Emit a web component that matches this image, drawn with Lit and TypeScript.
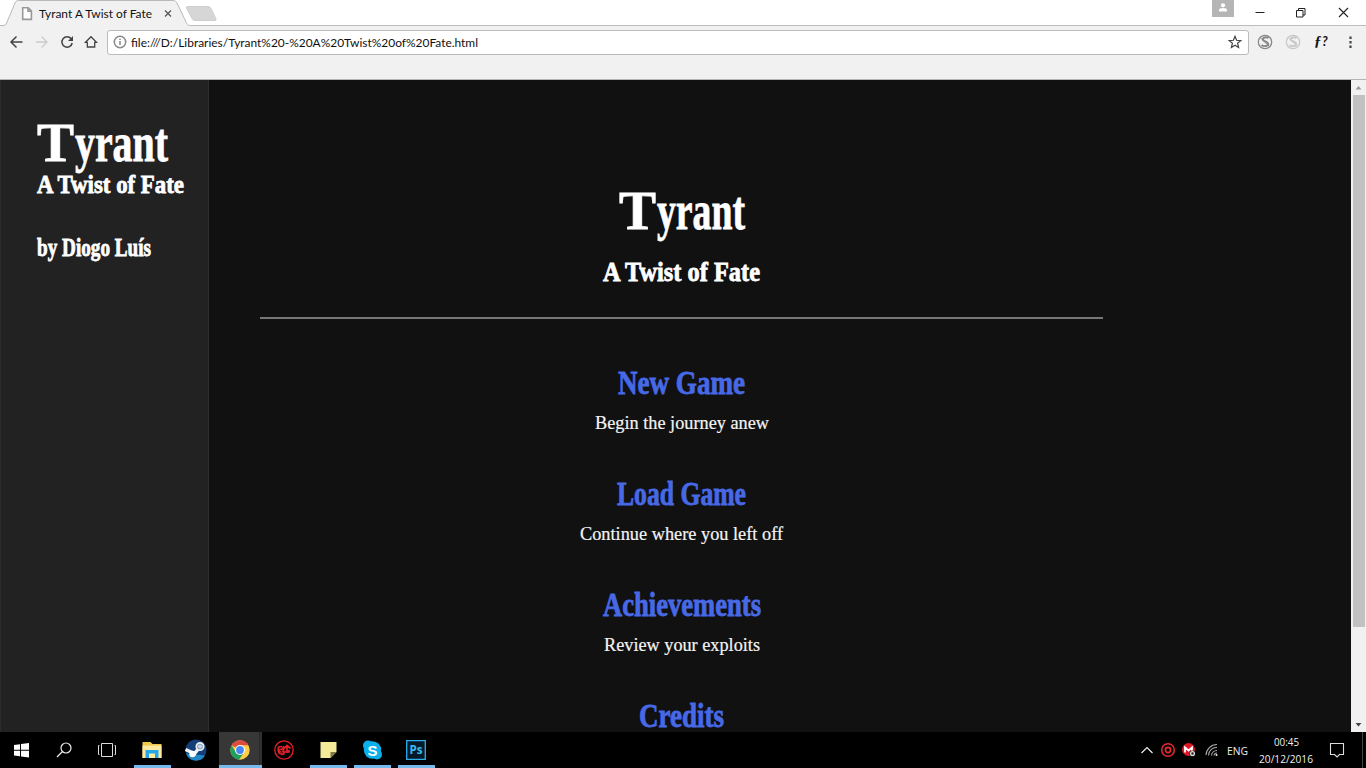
import { LitElement, html, svg, css, nothing } from "lit";
import { customElement } from "lit/decorators.js";

// One line of text set to an exact measure.
const line = (cls: string, text: string, width: number, height: number, baseline: number) => html`
  <svg class="line ${cls}" width=${width} height=${height}>
    <text x="0" y=${baseline} textLength=${width} lengthAdjust="spacingAndGlyphs">${text}</text>
  </svg>`;

// The title has a wide initial, followed by the condensed rest of the word.
const title = (width: number, height: number, baseline: number) => html`
  <svg class="line head" width=${width} height=${height}>
    <text y=${baseline}><tspan x="0" textLength="37" lengthAdjust="spacingAndGlyphs">T</tspan><tspan x="38" textLength=${width - 38} lengthAdjust="spacingAndGlyphs">yrant</tspan></text>
  </svg>`;

const icon = (width: number, height: number, body: unknown) => html`
  <svg class="icon" width=${width} height=${height} viewBox="0 0 ${width} ${height}" fill="none">${body}</svg>`;

@customElement("browser-chrome")
class BrowserChrome extends LitElement {
  static styles = css`
    :host { display: block; height: 80px; box-sizing: border-box; background: #f1f1f1; border-bottom: 1px solid #b4b4b4; font-family: Lato, "Open Sans", sans-serif; }
    svg { display: block; flex: none; overflow: visible; }
    .strip { height: 26px; display: flex; background: #fff; box-shadow: inset 0 -1px #bdbdbd; }
    .tabs { flex: 1; }
    .tab-title { font-size: 12px; fill: #111; }
    .user { width: 22px; height: 17px; background: #b5b5b5; margin-right: 17px; }
    .win { width: 42px; height: 25px; }
    .win.close { width: 31px; }
    .bar { display: flex; height: 32px; align-items: center; }
    .nav { display: flex; padding-left: 5px; width: 102px; }
    .address { display: flex; align-items: center; width: 1142px; box-sizing: border-box; height: 25px; border: 1px solid #bbb; border-radius: 3px; background: #fff; padding-left: 3px; }
    .url { font-size: 12px; fill: #111; margin-left: 2px; }
    .star { margin-left: auto; }
    .f { font: italic bold 15px "Liberation Serif", serif; fill: #111; }
    .q { font: italic bold 13px Lato, sans-serif; fill: #111; }
  `;
  render() {
    const arrow = svg`<path d="M18.500 12H7.500M12.500 6.500L7 12l5.500 5.500" stroke="#444" stroke-width="1.500"/>`;
    const flipped = svg`<path d="M6 12h11M11.500 6.500L17 12l-5.500 5.500" stroke="#ccc" stroke-width="1.400"/>`;
    const script = (c: string) => svg`<circle cx="14" cy="12" r="6.700" stroke=${c} stroke-width="1.300"/><path d="M17.500 8c-2.500-1.500-6-.5-5.500 1.800.4 1.700 5 1.700 5.200 4 .2 2.500-4.500 3-6.700 1.200" stroke=${c} stroke-width="1.900"/><path d="M9.500 8l9 8.500" stroke=${c}/>`;
    return html`
      <div class="strip">
        <svg class="tabs" width="1212" height="26">
          <path d="M0 25.500H4C6 25 6.500 23.500 7 22L15 3C15.700 1.500 16.500.5 18.500.5H173C175 .5 176 1.500 177 3L186 22C187 24.500 188 25.500 190 25.500V27H0Z" fill="#f1f1f1"/>
          <path d="M0 25.500H4C6 25 6.500 23.500 7 22L15 3C15.700 1.500 16.500.5 18.500.5H173C175 .5 176 1.500 177 3L186 22C187 24.500 188 25.500 190 25.500" fill="none" stroke="#b9b9b9"/>
          <path d="M22.700 7.700h5.500l3.200 3.200v8.500h-8.700zM28 7.700v3.500h3.400" fill="#fff" stroke="#999" stroke-width="1.600"/>
          <text class="tab-title" x="39" y="17.500" textLength="113" lengthAdjust="spacingAndGlyphs">Tyrant A Twist of Fate</text>
          <path d="M165 10.500l6 6M171 10.500l-6 6" stroke="#555" stroke-width="1.200"/>
          <path d="M187.500 6.500H208Q210 6.500 211 8.500L216 19Q216.500 20.500 215 20.500H195Q193 20.500 192 18.500L186.500 8Q186 6.500 187.500 6.500Z" fill="#d6d6d6" stroke="#cecece"/>
        </svg>
        <div class="user">${icon(22, 17, svg`<circle cx="11" cy="5.300" r="2.100" fill="#fff"/><path d="M7 11.500V10q0-2 4-2t4 2v1.500z" fill="#fff"/>`)}</div>
        <div class="win">${icon(42, 25, svg`<path d="M4.500 12.500h9" stroke="#222"/>`)}</div>
        <div class="win">${icon(31, 25, svg`<path d="M3.500 10.500h6.500v6.500H3.500zM5.500 10V8.500H12V15h-2" stroke="#222"/>`)}</div>
        <div class="win close">${icon(31, 25, svg`<path d="M4 8l9 9M13 8l-9 9" stroke="#222" stroke-width="1.100"/>`)}</div>
      </div>
      <div class="bar">
        <div class="nav">
          ${icon(25, 24, svg`<g transform="translate(-1)">${arrow}</g>`)}
          ${icon(25, 24, svg`<g transform="translate(0)">${flipped}</g>`)}
          ${icon(25, 24, svg`<path d="M16.200 8.700A5.200 5.200 0 1 0 17.200 13" stroke="#444" stroke-width="1.500"/><path d="M18 6v5h-5z" fill="#444"/>`)}
          ${icon(25, 24, svg`<path d="M5.500 12.300L11 6.700l5.500 5.600h-1.800v4.700H7.300v-4.700z" stroke="#444" stroke-width="1.300"/>`)}
        </div>
        <div class="address">
          ${icon(18, 24, svg`<circle cx="9" cy="12" r="5.700" stroke="#888" stroke-width="1.500"/><path d="M9 11v4M9 8.700v1.300" stroke="#888" stroke-width="1.500"/>`)}
          ${line("url", "file:///D:/Libraries/Tyrant%20-%20A%20Twist%20of%20Fate.html", 347, 23, 15.5)}
          <div class="star">${icon(25, 24, svg`<path d="M12 6.300l1.600 4 4.200.3-3.200 2.700 1 4.200-3.600-2.300-3.600 2.300 1-4.200-3.200-2.700 4.200-.3z" stroke="#444" stroke-width="1.200"/>`)}</div>
        </div>
        ${icon(28, 24, svg`<g transform="translate(2)">${script("#888")}</g>`)}
        ${icon(28, 24, svg`<g transform="translate(2)">${script("#c8c8c8")}</g>`)}
        ${icon(30, 24, svg`<text class="f" x="9" y="16">ƒ<tspan class="q" x="17">?</tspan></text>`)}
        ${icon(24, 24, svg`<path d="M14.500 6.500v2.500M14.500 11v2.500M14.500 15.500V18" stroke="#444" stroke-width="2.200" transform="translate(1)"/>`)}
      </div>`;
  }
}

@customElement("game-page")
class GamePage extends LitElement {
  static styles = css`
    :host { display: flex; height: 652px; background: #111; overflow: hidden; font-family: "Liberation Serif", serif; }
    svg { display: block; flex: none; overflow: visible; }
    .side { width: 209px; box-sizing: border-box; background: #222; border-right: 1px solid #2e2e2e; box-shadow: inset 1px 0 #2c2c2c; padding: 30px 0 0 37px; }
    .main { flex: 1; display: flex; flex-direction: column; align-items: center; padding: 100px 197px 0 0; overflow: hidden; }
    .head, .sub, .link { font-weight: bold; fill: #fff; stroke: #fff; stroke-width: .8px; }
    .head { font-size: 55px; }
    .sub { font-size: 27px; }
    .small { font-size: 25px; }
    .link { font-size: 33px; fill: #4769e6; stroke: #4769e6; }
    .caption { font-size: 19px; fill: #f4f4f4; stroke: #f4f4f4; stroke-width: .2px; }
    .rule { width: 843px; height: 2px; flex: none; background: #777; margin: 17px 0 41px; }
    .entry { height: 111px; flex: none; display: flex; flex-direction: column; align-items: center; }
    .scroll { width: 15px; background: #f1f1f1; display: flex; flex-direction: column; align-items: center; }
    .thumb { width: 12px; height: 532px; background: #c1c1c1; margin-bottom: auto; }
  `;
  private entries: [string, number, string, number][] = [
    ["New Game", 127, "Begin the journey anew", 174],
    ["Load Game", 129, "Continue where you left off", 203],
    ["Achievements", 158, "Review your exploits", 156],
    ["Credits", 85, "", 0],
  ];
  render() {
    return html`
      <aside class="side">
        ${title(131, 60, 51)}
        ${line("sub small", "A Twist of Fate", 147, 50, 23)}
        ${line("sub small", "by Diogo Luís", 114, 50, 36)}
      </aside>
      <main class="main">
        ${title(126, 65, 49)}
        ${line("sub", "A Twist of Fate", 157, 55, 36)}
        <div class="rule"></div>
        ${this.entries.map(([name, w, note, nw]) => html`
          <div class="entry">
            ${line("link", name, w, 45, 33.5)}
            ${note ? line("caption", note, nw, 40, 24) : nothing}
          </div>`)}
      </main>
      <div class="scroll">
        ${icon(15, 15, svg`<path d="M4.500 9.500L7.500 6l3 3.500z" fill="#999"/>`)}
        <div class="thumb"></div>
        ${icon(15, 15, svg`<path d="M4.500 6L7.500 9.500l3-3.500z" fill="#444"/>`)}
      </div>`;
  }
}

@customElement("task-bar")
class TaskBar extends LitElement {
  static styles = css`
    :host { display: flex; height: 36px; background: #000; font-family: "Open Sans", "Noto Sans", sans-serif; }
    svg { display: block; flex: none; }
    .cell { width: 43px; }
    .tasks { display: flex; padding-left: 1px; }
    .app { width: 44px; height: 36px; box-sizing: border-box; }
    .app.open { background: linear-gradient(#76b9ed, #76b9ed) 4px 100% / 37px 3px no-repeat; }
    .app.active { background: linear-gradient(#76b9ed, #76b9ed) 1px 100% / 43px 3px no-repeat, linear-gradient(90deg, #373737 40px, #222 40px, #303030 41px) 1px 0 / 43px 36px no-repeat; }
    .tray { margin-left: auto; display: flex; width: 229px; }
    .lang { width: 30px; padding-left: 4px; box-sizing: border-box; }
    .clock { width: 66px; display: flex; flex-direction: column; align-items: center; }
    .label { font-size: 11.500px; fill: #eee; overflow: visible; }
    .edge { width: 3px; margin-left: auto; border-left: 1px solid #444; }
    .skype { font: bold 15px "Liberation Sans", sans-serif; fill: #fff; }
    .ps { font: bold 12px "Open Sans", sans-serif; fill: #35bdf1; }
  `;
  render() {
    const cell = (body: unknown) => html`<div class="cell">${icon(43, 36, body)}</div>`;
    const app = (state: string, body: unknown) => html`<div class="app ${state}">${icon(44, 36, body)}</div>`;
    return html`
      ${cell(svg`<path d="M14 13l6-.8v5.500h-6zM21 12l8-1v6.700h-8zM14 18.700h6v5.500l-6-.8zM21 18.700h8v6.800l-8-1.100z" fill="#fff"/>`)}
      ${cell(svg`<circle cx="23" cy="16" r="5" stroke="#eee" stroke-width="1.200"/><path d="M19.500 19.500L14 25" stroke="#eee" stroke-width="1.300"/>`)}
      ${cell(svg`<path d="M15.500 11.500h11v13h-11zM13.500 13.500h-1v9h1M28.500 13.500h1v9h-1" stroke="#ddd"/>`)}
      <div class="tasks">
        ${app("open", svg`<path d="M12.500 10h8l2 2h9v14h-19z" fill="#f2c84c"/><path d="M12.500 13.500h19V26h-19z" fill="#ffe9a0"/><path d="M15.500 26v-8h13v8H25v-4.500h-6V26z" fill="#27a6e8"/>`)}
        ${app("", svg`<circle cx="22" cy="18" r="10.500" fill="#123f78"/><path d="M12 21.500a10.500 10.500 0 0 0 19 2z" fill="#2386c6"/><path d="M11.500 17.500l9 4 5-6" stroke="#eef3f7" stroke-width="3.500"/><circle cx="26" cy="14.500" r="3.700" fill="#8ea5bd" stroke="#e8edf2" stroke-width="1.700"/><circle cx="26" cy="14.500" r="1.800" fill="#ccd9e5"/><circle cx="18.500" cy="22" r="3.200" fill="#fff"/>`)}
        ${app("active", svg`<circle cx="22" cy="18" r="9.700" fill="#ffcd46"/><path d="M22 18L13.600 13.150A9.700 9.700 0 0 1 30.400 13.150H22z" fill="#dd4b3e"/><path d="M13.600 13.150A9.700 9.700 0 0 0 21 27.650L26 20.500 18 20.500z" fill="#1fa15d"/><circle cx="22" cy="18" r="5" fill="#fff"/><circle cx="22" cy="18" r="3.900" fill="#4387f4"/>`)}
        ${app("", svg`<circle cx="22" cy="18" r="9.200" stroke="#e51f29" stroke-width="1.300"/><path d="M20 14.500l-3 .5-1 3 1 3 3 1.500 2.500-1M16 15l2 6M19 18l3-3" stroke="#e51f29" stroke-width="1.500"/><circle cx="19.500" cy="18.500" r="1.700" stroke="#e51f29"/><path d="M25 21v-6M22 16.500l3-3 3.500 3M21.500 14v8.500M22 20h5v-2" stroke="#e51f29" stroke-width="1.700"/>`)}
        ${app("open", svg`<path d="M14.500 10h16v10l-6 6h-10z" fill="#f5e99a"/><path d="M30.500 20l-6 6v-6z" fill="#817947"/>`)}
        ${app("open", svg`<circle cx="22.500" cy="18" r="8.700" fill="#0bafea"/><circle cx="18" cy="13.500" r="5" fill="#0bafea"/><circle cx="27" cy="22.500" r="5" fill="#0bafea"/><text class="skype" x="17.500" y="23.500">S</text>`)}
        ${app("open", svg`<path d="M12.700 8.700h18.600v18.600H12.700z" fill="#06192b" stroke="#2cafe8" stroke-width="1.300"/><text class="ps" x="15.500" y="21.500" textLength="13" lengthAdjust="spacingAndGlyphs">Ps</text>`)}
      </div>
      <div class="tray">
        ${icon(20, 36, svg`<path d="M4.500 21l5.500-5.500 5.500 5.500" stroke="#eee" stroke-width="1.200"/>`)}
        ${icon(22, 36, svg`<circle cx="11" cy="18" r="6.300" stroke="#e52b2f" stroke-width="1.500"/><circle cx="11" cy="18" r="2.600" stroke="#e52b2f" stroke-width="1.700"/>`)}
        ${icon(21, 36, svg`<circle cx="9.500" cy="17.500" r="6.500" fill="#e01724"/><path d="M6 20.500v-5l3.500 3 3.500-3v4" stroke="#fff" stroke-width="1.800"/><circle cx="13.500" cy="21.500" r="3" fill="#222"/><circle cx="13.500" cy="21.500" r="1.900" stroke="#ddd" stroke-width="1.300"/>`)}
        ${icon(23, 36, svg`<path d="M6 23a11 11 0 0 1 11-10.500M8.500 23.500a8 8 0 0 1 8.500-8M11.500 23.500a5.500 5.500 0 0 1 5.500-5M14 23.500a3 3 0 0 1 3-2.500" stroke="#aaa" stroke-width="1.100"/><circle cx="16.500" cy="23" r="1" fill="#eee"/>`)}
        <div class="lang">${line("label", "ENG", 21, 36, 23)}</div>
        <div class="clock">
          ${line("label", "00:45", 25, 17, 14)}
          ${line("label", "20/12/2016", 54, 19, 13.5)}
        </div>
        ${icon(36, 36, svg`<path d="M11.500 11.500h13v11h-4L18 25l-2.500-2.500h-4z" stroke="#ddd" stroke-width="1.100"/>`)}
        <div class="edge"></div>
      </div>`;
  }
}

@customElement("app-root")
class AppRoot extends LitElement {
  static styles = css`
    :host { display: flex; flex-direction: column; width: 1366px; height: 768px; overflow: hidden; }
  `;
  render() {
    return html`<browser-chrome></browser-chrome><game-page></game-page><task-bar></task-bar>`;
  }
}
